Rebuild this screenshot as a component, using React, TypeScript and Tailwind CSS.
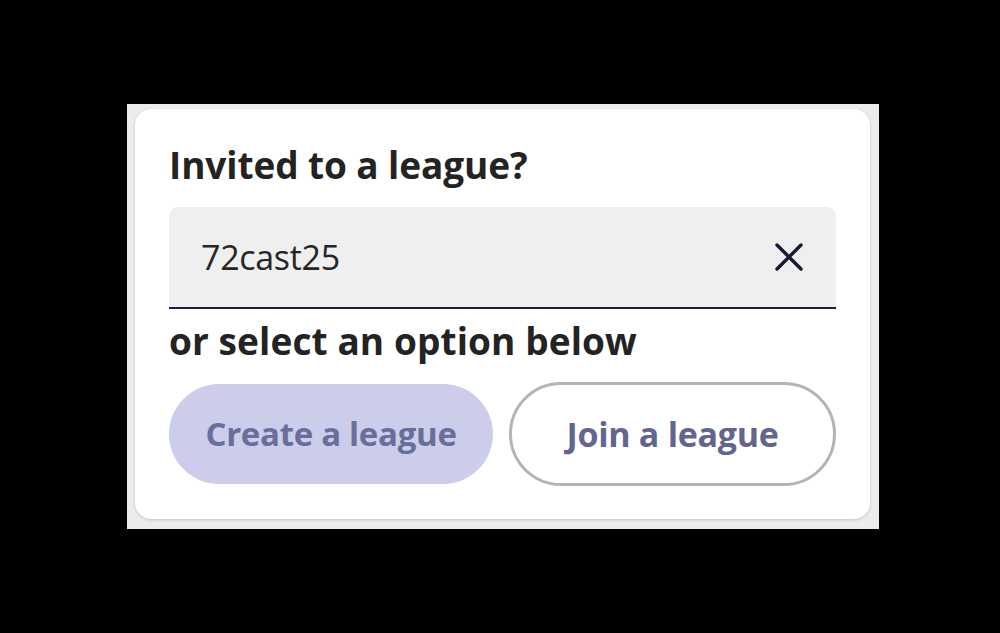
import React from "react";

export default function App() {
  return (
    <div className="w-[1000px] h-[633px] bg-black flex items-start" style={{ fontFamily: '"Open Sans", "Noto Sans", sans-serif' }}>
      <div className="mt-[104px] ml-[127px] w-[752px] h-[425px] bg-[#ececec] pt-[5px] pl-[8px] pr-[9px] pb-[10px]">
        <div className="w-full h-full bg-white rounded-[16px] shadow-[0_1px_3px_rgba(0,0,0,0.18)] pl-[34px] pr-[34px] pt-[34px]">
          <h1 className="text-[37px] font-bold text-[#232323] leading-[44px] tracking-[-0.1px]">Invited to a league?</h1>
          <div className="mt-[20px] h-[102px] bg-[#efefef] rounded-t-[9px] border-b-[2px] border-[#1b1f4f] flex items-center justify-between pl-[32px] pr-[32px]">
            <span className="text-[34px] text-[#262626] tracking-[-0.3px]">72cast25</span>
            <svg width="30" height="30" viewBox="0 0 30 30" fill="none" stroke="#151a33" strokeWidth="3.4" strokeLinecap="round">
              <path d="M3 3 L27 27 M27 3 L3 27" />
            </svg>
          </div>
          <div className="mt-[10px] text-[37px] font-bold text-[#232323] leading-[44px] tracking-[0.1px]">or select an option below</div>
          <div className="mt-[19px] flex gap-[16px] items-center">
            <div className="w-[325px] h-[100px] rounded-full bg-[#cbcdea] flex items-center justify-center text-[33px] font-bold text-[#6a6e9b] tracking-[-0.3px]">Create a league</div>
            <div className="w-[328px] h-[104px] rounded-full border-[3px] border-[#b3b3bb] flex items-center justify-center text-[34px] font-bold text-[#62668f] tracking-[-0.3px]">Join a league</div>
          </div>
        </div>
      </div>
    </div>
  );
}
